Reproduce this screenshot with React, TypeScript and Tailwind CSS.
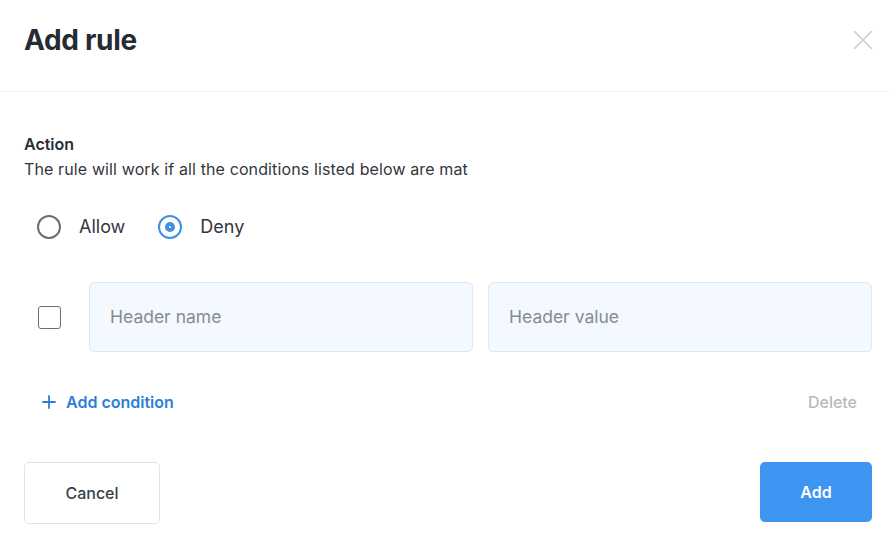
import React from "react";

export default function App() {
  return (
    <div
      className="w-[889px] h-[550px] bg-white overflow-hidden"
      style={{ fontFamily: "Inter, 'Noto Sans', sans-serif" }}
    >
      <div className="h-[92px] border-b border-[#f0f0f2] flex justify-between items-start pl-[24px] pr-[16px] pt-[22px]">
        <h1 className="text-[28px] leading-[36px] font-bold text-[#262a33] tracking-[-0.3px]">Add rule</h1>
        <button className="mt-[8px] w-[20px] h-[20px] flex items-center justify-center">
          <svg width="20" height="20" viewBox="0 0 20 20" fill="none" stroke="#c9cdd6" strokeWidth="1.6" strokeLinecap="round">
            <path d="M1.5 1.5 L18.5 18.5 M18.5 1.5 L1.5 18.5" />
          </svg>
        </button>
      </div>

      <div className="pl-[24px] pr-[17px] pt-[42px]">
        <div className="text-[16px] leading-[20px] font-semibold text-[#2a2d34]">Action</div>
        <div className="mt-[4px] text-[16px] leading-[22px] text-[#33363d] tracking-[0.12px]">
          The rule will work if all the conditions listed below are mat
        </div>

        <div className="mt-[35px] flex items-center pl-[13px] h-[24px]">
          <label className="flex items-center h-[24px]">
            <span className="w-[24px] h-[24px] rounded-full border-2 border-[#6e6e6e] box-border" />
            <span className="ml-[18px] text-[18px] leading-[24px] text-[#33363d]">Allow</span>
          </label>
          <label className="flex items-center ml-[33px] h-[24px]">
            <span className="w-[24px] h-[24px] rounded-full border-2 border-[#3d8fe8] box-border flex items-center justify-center">
              <span className="w-[10px] h-[10px] rounded-full bg-[#3d8fe8] flex items-center justify-center">
                <span className="w-[2px] h-[2px] rounded-full bg-white" />
              </span>
            </span>
            <span className="ml-[18px] text-[18px] leading-[24px] text-[#33363d]">Deny</span>
          </label>
        </div>

        <div className="mt-[43px] flex items-center">
          <span className="ml-[14px] w-[23px] h-[23px] rounded-[3px] border-[1.5px] border-[#6e6e6e] box-border" />
          <div className="ml-[28px] w-[384px] h-[70px] rounded-[5px] border border-[#dce7f8] bg-[#f4f8ff] flex items-center pl-[20px] text-[17.5px] leading-[24px] text-[#868b95]">
            Header name
          </div>
          <div className="ml-[15px] w-[384px] h-[70px] rounded-[5px] border border-[#dce7f8] bg-[#f4f8ff] flex items-center pl-[20px] text-[17.5px] leading-[24px] text-[#868b95]">
            Header value
          </div>
        </div>

        <div className="mt-[40px] h-[20px] flex items-center justify-between pr-[15px]">
          <button className="ml-[18px] flex items-center text-[16px] leading-[20px] font-semibold text-[#2b7fd9]">
            <svg width="14" height="14" viewBox="0 0 14 14" fill="none" stroke="#2b7fd9" strokeWidth="1.8" strokeLinecap="round">
              <path d="M7 1 V13 M1 7 H13" />
            </svg>
            <span className="ml-[10px]">Add condition</span>
          </button>
          <button className="text-[16px] leading-[20px] font-medium text-[#b9b9bb]">Delete</button>
        </div>

        <div className="mt-[50px] flex justify-between items-start">
          <button className="w-[136px] h-[62px] rounded-[5px] border border-[#dfe3ea] bg-white text-[16px] leading-[20px] font-medium text-[#3a3e48]">
            Cancel
          </button>
          <button className="w-[112px] h-[60px] rounded-[5px] bg-[#3d95f1] text-[16px] leading-[20px] font-semibold text-white">
            Add
          </button>
        </div>
      </div>
    </div>
  );
}
